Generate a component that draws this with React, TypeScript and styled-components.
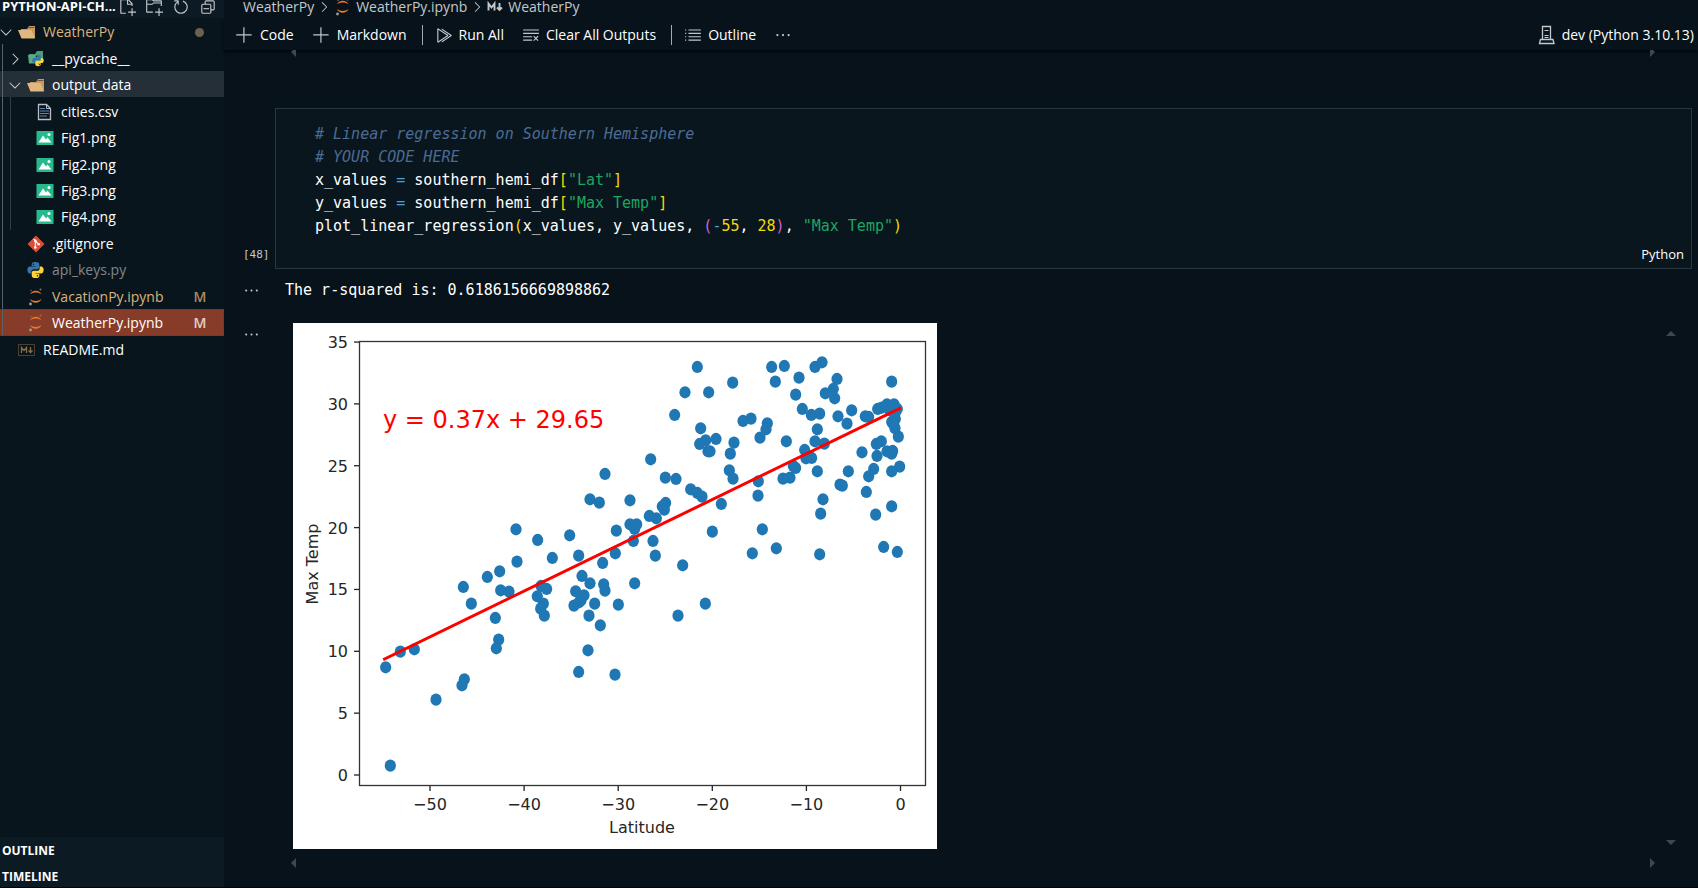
import React from 'react';
import styled, { createGlobalStyle, css } from 'styled-components';
import {
  VscAdd,
  VscChevronDown,
  VscChevronRight,
  VscClearAll,
  VscCollapseAll,
  VscEllipsis,
  VscListUnordered,
  VscNewFile,
  VscNewFolder,
  VscRefresh,
  VscRunAll,
} from 'react-icons/vsc';

const color = {
  editor: '#07121a',
  sidebar: '#09151d',
  section: '#0c1a24',
  cell: '#09161e',
  border: '#2a363f',
  text: '#ffffff',
  muted: '#c4c8ca',
  modified: '#d9b47c',
};

const uiFont = '"Open Sans", "Noto Sans", sans-serif';
const codeFont = '"DejaVu Sans Mono", "Liberation Mono", monospace';

const GlobalStyle = createGlobalStyle`
  *, *::before, *::after { box-sizing: border-box; }
  body {
    margin: 0;
    background: ${color.editor};
    color: ${color.text};
    font: 14px/20px ${uiFont};
  }
  button {
    margin: 0;
    padding: 0;
    border: 0;
    background: none;
    color: inherit;
    font: inherit;
    cursor: pointer;
  }
  svg { display: block; flex: none; }
`;

const Workbench = styled.div`
  display: grid;
  grid-template-columns: 224px minmax(0, 1fr);
  height: 100vh;
  overflow: hidden;
  border-bottom: 1px solid #020508;
`;

/* ---------- Explorer ---------- */

const Sidebar = styled.aside`
  display: flex;
  flex-direction: column;
  min-height: 0;
  background: ${color.sidebar};
`;

const ExplorerHeader = styled.header`
  display: flex;
  align-items: center;
  justify-content: space-between;
  height: 18px;
  padding: 0 7px 5px 2px;
  background: ${color.section};
`;

const ExplorerTitle = styled.h2`
  margin: 0;
  font-size: 13px;
  font-weight: 700;
  line-height: 13px;
  white-space: nowrap;
`;

const HeaderActions = styled.div`
  display: flex;
  gap: 9px;
  color: ${color.muted};
`;

const Tree = styled.ul`
  display: grid;
  grid-auto-rows: 1fr;
  height: 344px;
  margin: 0;
  padding: 0;
  list-style: none;
`;

const TreeItem = styled.li`
  display: flex;
`;

const guide = 'linear-gradient(#56616a, #56616a) no-repeat';

const TreeRow = styled.button<{ $level: number; $tone?: string; $state?: 'focused' | 'active' }>`
  display: flex;
  flex: 1;
  align-items: center;
  padding: 2px 17px 0 ${(p) => p.$level * 9}px;
  color: ${(p) => p.$tone ?? color.text};
  text-align: left;
  background: ${(p) =>
    p.$level === 0
      ? 'none'
      : p.$level === 1
        ? `${guide} 2px 0 / 1px 100%`
        : `${guide} 2px 0 / 1px 100%, linear-gradient(#323d45, #323d45) no-repeat 10px 0 / 1px 100%`};
  ${(p) => p.$state === 'focused' && css`background-color: #252f38;`}
  ${(p) =>
    p.$state === 'active' &&
    css`
      background-color: #863c29;
      box-shadow: inset 0 0 0 1px #8f3210;
    `}
`;

const Twistie = styled.span`
  display: flex;
  justify-content: center;
  width: 11px;
  margin-right: 7px;
  color: ${color.muted};
`;

const FileIcon = styled.span`
  display: flex;
  width: 25px;
`;

const FileName = styled.span`
  flex: 1;
  white-space: nowrap;
`;

const StatusLetter = styled.span`
  width: 14px;
  font-weight: 600;
  text-align: center;
  opacity: 0.75;
`;

const StatusDot = styled.span`
  width: 9px;
  height: 9px;
  margin-right: 3px;
  border-radius: 50%;
  background: #6c614d;
`;

const Sections = styled.div`
  margin: auto 0 -2px;
  background: ${color.section};
`;

const SectionButton = styled.button`
  display: block;
  width: 100%;
  height: 26px;
  padding: 2px 0 0 2px;
  font-size: 12px;
  font-weight: 700;
  text-align: left;
`;

/* ---------- Editor ---------- */

const Editor = styled.main`
  display: flex;
  flex-direction: column;
  min-width: 0;
  min-height: 0;
`;

const Breadcrumb = styled.nav`
  display: flex;
  align-items: center;
  gap: 2px;
  height: 20px;
  padding: 0 0 6px 19px;
  line-height: 14px;
  color: ${color.muted};
`;

const Crumb = styled.a`
  display: flex;
  align-items: center;
  gap: 5px;
  color: inherit;
  text-decoration: none;
  white-space: nowrap;
`;

const Toolbar = styled.div`
  display: flex;
  align-items: center;
  height: 30px;
  padding: 0 4px 0 11px;
  box-shadow: 0 2px 3px #02070b;
`;

const ToolButton = styled.button<{ $wide?: boolean }>`
  display: flex;
  align-items: center;
  gap: 6px;
  margin-right: ${(p) => (p.$wide ? 18 : 15)}px;
  white-space: nowrap;
  svg { color: ${color.muted}; }
`;

const Divider = styled.span`
  width: 1px;
  height: 20px;
  margin-right: 12px;
  background: #a5a9ab;
`;

const KernelButton = styled(ToolButton)`
  margin: 0 0 0 auto;
`;

const Notebook = styled.div`
  flex: 1;
  min-height: 0;
  overflow: hidden;
`;

const ArrowRow = styled.div`
  display: flex;
  justify-content: space-between;
  align-items: center;
  height: 28px;
  padding: 0 43px 0 67px;
`;

const TopArrowRow = styled(ArrowRow)`
  align-items: flex-start;
  height: 61px;
  margin-top: -3px;
`;

const CellRow = styled.section`
  display: grid;
  grid-template-columns: 51px minmax(0, 1fr);
  padding-right: 6px;
`;

const Gutter = styled.div`
  padding-left: 19px;
  color: ${color.muted};
`;

const ExecutionCount = styled(Gutter)`
  align-self: end;
  padding-bottom: 4px;
  font: 11px/20px ${codeFont};
`;

const CodeCell = styled.div`
  padding: 14px 7px 0 39px;
  border: 1px solid ${color.border};
  background: ${color.cell};
`;

const CodeLines = styled.pre`
  display: grid;
  grid-auto-rows: 1fr;
  align-items: center;
  height: 114px;
  margin: 0;
  font: 15px/22px ${codeFont};
`;

const Tok = styled.span<{ $c: string }>`
  color: ${(p) => p.$c};
`;

const Comment = styled.span`
  color: #4c6c93;
  font-style: italic;
`;

const CellStatus = styled.div`
  display: flex;
  justify-content: flex-end;
  align-items: center;
  height: 31px;
  padding-top: 3px;
  font-size: 13px;
`;

const TextOutput = styled.output`
  display: block;
  padding-left: 10px;
  font: 15px/42px ${codeFont};
`;

const OutputGutter = styled(Gutter)`
  display: flex;
  align-items: center;
  height: 42px;
`;

const PlotRow = styled(CellRow)`
  padding-top: 12px;
  ${OutputGutter} { height: 22px; }
`;

const PlotOutput = styled.div`
  display: flex;
  justify-content: space-between;
  padding: 0 16px 0 18px;
`;

const ScrollArrows = styled.div`
  display: flex;
  flex-direction: column;
  justify-content: space-between;
  padding: 8px 0 4px;
`;

/* ---------- Icons ---------- */

const arrowShapes = {
  up: '0,5 5,0 10,5',
  down: '0,0 10,0 5,5',
  left: '5,0 5,10 0,5',
  right: '0,0 5,5 0,10',
};

function Arrow({ dir }: { dir: keyof typeof arrowShapes }) {
  const flat = dir === 'up' || dir === 'down';
  return (
    <svg width={flat ? 10 : 5} height={flat ? 5 : 10} aria-hidden="true">
      <polygon points={arrowShapes[dir]} fill="#41484d" />
    </svg>
  );
}

const FolderIcon = () => (
  <svg width="18" height="16" viewBox="0 0 18 16">
    <path d="M3 14V5h6l2-3h6v12z" fill="#c79a62" />
    <path d="M10.500 3.500h6" stroke="#6d5535" strokeWidth="1" />
    <path d="M0 6h13.500l3.500 8.500H3.500z" fill="#e0b77f" />
  </svg>
);

function PythonShape() {
  return (
    <>
      <path
        d="M8.900.5C5.200.5 5 2 5 3v1.700h4v.7H3.300C1.300 5.400.4 7 .4 9s1 3.600 2.700 3.600h1.500v-2c0-1.500 1.200-2.500 2.600-2.500h3.600c1.200 0 2.200-1 2.200-2.200V3C13 1.300 11.400.5 8.900.5z"
        fill="#3776ab"
      />
      <path
        d="M9.100 17.500c3.700 0 3.900-1.500 3.900-2.500v-1.700H9v-.7h5.700c2 0 2.900-1.600 2.900-3.600s-1-3.600-2.700-3.600h-1.500v2c0 1.500-1.200 2.500-2.600 2.500H7.200c-1.200 0-2.200 1-2.200 2.200V15c0 1.700 1.600 2.500 4.100 2.500z"
        fill="#ffd43b"
      />
      <circle cx="6.900" cy="2.800" r=".8" fill="#0a151d" />
      <circle cx="11.100" cy="15.200" r=".8" fill="#0a151d" />
    </>
  );
}

const PythonIcon = () => (
  <svg width="17" height="18" viewBox="0 0 18 18">
    <PythonShape />
  </svg>
);

const PythonFolderIcon = () => (
  <svg width="18" height="17" viewBox="0 0 18 17">
    <path d="M2 13V4h6l2-3h6v12z" fill="#4d9a78" />
    <path d="M1 5h11l2 8.500H2z" fill="#58ab86" />
    <svg x="5" y="4" width="12" height="13" viewBox="0 0 18 18">
      <PythonShape />
    </svg>
  </svg>
);

const TextFileIcon = () => (
  <svg width="18" height="18" viewBox="0 0 18 18">
    <path d="M2.500 1.500h8l4 4v11h-12z" fill="none" stroke="#b9bec3" strokeWidth="1.300" />
    <path d="M10.500 1.500v4h4" fill="none" stroke="#b9bec3" />
    <path d="M4 5.500h5M4 8h9M4 10.500h9M4 13h7" stroke="#5d84b5" strokeWidth="1.200" />
  </svg>
);

const ImageIcon = () => (
  <svg width="18" height="14" viewBox="0 0 18 14">
    <rect x=".5" width="17" height="14" fill="#26b98b" />
    <path d="M2.500 11.500l4.500-7 3 4 1.500-2 4 5z" fill="#fff" />
    <circle cx="13" cy="3.500" r="1.500" fill="#fff" />
  </svg>
);

const GitIcon = () => (
  <svg width="18" height="18" viewBox="0 0 18 18">
    <path d="M9 .5L17.500 9 9 17.500.5 9z" fill="#dd4c35" />
    <path d="M6.500 4l1.700 1.700M8.300 5.500v7M8.500 6l3.200 3.200" stroke="#fff" strokeWidth="1.100" fill="none" />
    <circle cx="8.300" cy="5.800" r="1.300" fill="#fff" />
    <circle cx="8.300" cy="12.500" r="1.300" fill="#fff" />
    <circle cx="11.700" cy="9.300" r="1.300" fill="#fff" />
  </svg>
);

const JupyterIcon = () => (
  <svg width="17" height="18" viewBox="0 0 17 18">
    <path d="M3 6.500c2-5 9.500-5 11.500 0-3-2.600-8.500-2.600-11.500 0z" fill="#f37726" />
    <path d="M3 11c3 2.600 8.500 2.600 11.500 0-2 5-9.500 5-11.500 0z" fill="#f37726" />
    <circle cx="13.500" cy="1.500" r="1" fill="#767677" />
    <circle cx="4" cy="2.500" r=".7" fill="#767677" />
    <circle cx="3.500" cy="16" r="1.400" fill="#9e9e9e" />
  </svg>
);

const MarkdownFileIcon = () => (
  <svg width="18" height="12" viewBox="0 0 18 12" fill="none">
    <rect x=".5" y=".5" width="16" height="11" stroke="#4c4034" />
    <path d="M3.500 9V3.500L6 6.500l2.500-3V9M12.500 3v5M10.500 6.500l2 2 2-2" stroke="#8a6c4a" strokeWidth="1.300" />
  </svg>
);

const MarkdownSymbolIcon = () => (
  <svg width="16" height="12" viewBox="0 0 16 12" fill="none">
    <path d="M1.500 9.500V2.500L4.500 6.500l3-4v7M12.500 2v7M10 6.500l2.500 2.500L15 6.500" stroke="#c4c8ca" strokeWidth="1.900" />
  </svg>
);

const ServerIcon = () => (
  <svg width="18" height="20" viewBox="0 0 18 20" fill="none" stroke="#c4c8ca" strokeWidth="1.300">
    <path d="M4.500 14.500v-13h8v13M1.500 18.500l1-4h12.500l1 4z" />
    <path d="M6.500 5.500h4M6.500 10.500h4M6.500 12.500h4" strokeWidth="1" />
  </svg>
);

/* ---------- Data ---------- */

type Entry = {
  name: string;
  level: number;
  icon: () => React.ReactElement;
  folder?: 'open' | 'closed';
  tone?: string;
  badge?: 'dot' | 'M';
  state?: 'focused' | 'active';
};

const entries: Entry[] = [
  { name: 'WeatherPy', level: 0, icon: FolderIcon, folder: 'open', tone: color.modified, badge: 'dot' },
  { name: '__pycache__', level: 1, icon: PythonFolderIcon, folder: 'closed' },
  { name: 'output_data', level: 1, icon: FolderIcon, folder: 'open', state: 'focused' },
  { name: 'cities.csv', level: 2, icon: TextFileIcon },
  { name: 'Fig1.png', level: 2, icon: ImageIcon },
  { name: 'Fig2.png', level: 2, icon: ImageIcon },
  { name: 'Fig3.png', level: 2, icon: ImageIcon },
  { name: 'Fig4.png', level: 2, icon: ImageIcon },
  { name: '.gitignore', level: 1, icon: GitIcon },
  { name: 'api_keys.py', level: 1, icon: PythonIcon, tone: '#82878b' },
  { name: 'VacationPy.ipynb', level: 1, icon: JupyterIcon, tone: color.modified, badge: 'M' },
  { name: 'WeatherPy.ipynb', level: 1, icon: JupyterIcon, badge: 'M', state: 'active' },
  { name: 'README.md', level: 0, icon: MarkdownFileIcon },
];

/* Scatter samples, in thirds of a plot unit. */
const samples: [number, number][] = [
  [936, 452], [891, 528], [919, 538], [669, 618], [734, 650], [830, 636], [970, 622], [672, 715],
  [778, 704], [857, 697], [620, 744], [583, 761], [511, 791], [929, 719], [967, 690], [867, 758],
  [891, 780], [932, 783], [936, 802], [623, 801], [648, 805], [744, 788], [761, 797], [733, 819],
  [848, 804], [873, 816], [535, 841], [607, 884], [617, 949], [610, 975], [322, 985], [364, 978],
  [278, 1032], [514, 1068], [507, 1086], [429, 1129], [292, 1327], [751, 841], [743, 856], [754, 877],
  [843, 847], [858, 837], [905, 841], [976, 844], [888, 877], [922, 906], [885, 981], [857, 1046],
  [966, 1054], [864, 831], [1155, 877], [1237, 841], [1025, 780], [1213, 131], [1176, 207], [1247, 207],
  [1319, 178], [1436, 131], [1474, 128], [1447, 175], [1518, 163], [1508, 214], [1566, 131], [1587, 117],
  [1632, 167], [1621, 197], [1597, 210], [1625, 225], [1796, 175], [1145, 275], [1528, 257], [1555, 275],
  [1580, 271], [1635, 279], [1676, 261], [1662, 301], [1717, 279], [1727, 281], [1754, 257], [1766, 253],
  [1782, 243], [1803, 243], [1813, 257], [1791, 261], [1806, 271], [1796, 296], [1807, 287], [1806, 315],
  [1802, 303], [1816, 340], [1374, 286], [1350, 293], [1423, 300], [1419, 318], [1401, 343], [1223, 315],
  [1238, 351], [1220, 362], [1269, 347], [1323, 358], [1312, 391], [1245, 384], [1251, 384], [1073, 408],
  [1480, 354], [1573, 318], [1566, 354], [1594, 361], [1535, 380], [1539, 405], [1556, 404], [1707, 387],
  [1750, 362], [1765, 354], [1752, 398], [1782, 384], [1799, 383], [1796, 391], [1820, 430], [1796, 444],
  [1742, 437], [1727, 459], [1666, 444], [1573, 444], [1501, 428], [1508, 434], [1491, 463], [1470, 466],
  [1309, 441], [1320, 466], [1396, 474], [1395, 517], [1117, 463], [1149, 467], [1193, 498], [1213, 509],
  [1227, 520], [1285, 542], [1011, 531], [1118, 539], [1108, 549], [1114, 559], [1069, 578], [1090, 585],
  [1011, 603], [1031, 603], [1025, 617], [1021, 653], [1080, 653], [1087, 697], [1169, 726], [1258, 625],
  [1408, 618], [1378, 690], [1450, 675], [1580, 693], [1583, 571], [1590, 528], [1641, 484], [1648, 487],
  [1720, 506], [1748, 574], [1796, 549], [1772, 671], [1813, 686],
];

const xTicks = [-50, -40, -30, -20, -10, 0];
const yTicks = [0, 5, 10, 15, 20, 25, 30, 35];
const xAt = (lat: number) => 607.5 + lat * 9.41;
const yAt = (temp: number) => 452 - temp * 12.37;

function RegressionPlot() {
  return (
    <svg
      width="644"
      height="526"
      viewBox="0 0 644 526"
      role="img"
      aria-label="Max Temp against Latitude"
      fontFamily='"DejaVu Sans", sans-serif'
      fontSize="16"
      fill="#262626"
    >
      <rect width="644" height="526" fill="#fff" />
      {samples.map(([x, y], i) => (
        <ellipse key={i} cx={x / 3} cy={y / 3 + 0.3} rx="5.600" ry="6.100" fill="#1f77b4" />
      ))}
      <path d="M91.500 336L606.500 85.500" stroke="#f00" strokeWidth="3" strokeLinecap="square" />
      <rect x="66.500" y="18.500" width="566" height="444" fill="none" stroke="#333" strokeWidth="1.300" />
      {xTicks.map((t) => (
        <g key={t}>
          <path d={`M${xAt(t)} 463v5`} stroke="#222" strokeWidth="1.300" />
          <text x={xAt(t)} y="487" textAnchor="middle">
            {t < 0 ? `−${-t}` : t}
          </text>
        </g>
      ))}
      {yTicks.map((t) => (
        <g key={t}>
          <path d={`M61 ${yAt(t)}h5`} stroke="#222" strokeWidth="1.300" />
          <text x="55" y={yAt(t) + 6} textAnchor="end">
            {t}
          </text>
        </g>
      ))}
      <text x="349" y="510" textAnchor="middle">Latitude</text>
      <text transform="translate(25 241) rotate(-90)" textAnchor="middle">Max Temp</text>
      <text x="90" y="105" fontSize="24" fill="#f00">y = 0.37x + 29.65</text>
    </svg>
  );
}

const str = '#1ea562';
const op = '#4aa3d8';
const yellow = '#f5d90a';
const pink = '#d05fd0';

export default function App() {
  return (
    <>
      <GlobalStyle />
      <Workbench>
        <Sidebar>
          <ExplorerHeader>
            <ExplorerTitle>PYTHON-API-CH...</ExplorerTitle>
            <HeaderActions>
              <button aria-label="New File"><VscNewFile size={18} /></button>
              <button aria-label="New Folder"><VscNewFolder size={18} /></button>
              <button aria-label="Refresh"><VscRefresh size={18} /></button>
              <button aria-label="Collapse Folders"><VscCollapseAll size={18} /></button>
            </HeaderActions>
          </ExplorerHeader>
          <Tree>
            {entries.map(({ name, level, icon: Icon, folder, tone, badge, state }) => (
              <TreeItem key={name}>
                <TreeRow $level={level} $tone={tone} $state={state}>
                  <Twistie>
                    {folder === 'open' && <VscChevronDown size={18} />}
                    {folder === 'closed' && <VscChevronRight size={18} />}
                  </Twistie>
                  <FileIcon><Icon /></FileIcon>
                  <FileName>{name}</FileName>
                  {badge === 'dot' && <StatusDot />}
                  {badge === 'M' && <StatusLetter>M</StatusLetter>}
                </TreeRow>
              </TreeItem>
            ))}
          </Tree>
          <Sections>
            <SectionButton>OUTLINE</SectionButton>
            <SectionButton>TIMELINE</SectionButton>
          </Sections>
        </Sidebar>

        <Editor>
          <Breadcrumb aria-label="Breadcrumb">
            <Crumb href="#folder">WeatherPy</Crumb>
            <VscChevronRight size={16} />
            <Crumb href="#file"><JupyterIcon />WeatherPy.ipynb</Crumb>
            <VscChevronRight size={16} />
            <Crumb href="#heading"><MarkdownSymbolIcon />WeatherPy</Crumb>
          </Breadcrumb>
          <Toolbar>
            <ToolButton $wide><VscAdd size={19} />Code</ToolButton>
            <ToolButton><VscAdd size={19} />Markdown</ToolButton>
            <Divider />
            <ToolButton $wide><VscRunAll size={18} />Run All</ToolButton>
            <ToolButton><VscClearAll size={18} />Clear All Outputs</ToolButton>
            <Divider />
            <ToolButton $wide><VscListUnordered size={18} />Outline</ToolButton>
            <ToolButton aria-label="More Actions"><VscEllipsis size={18} /></ToolButton>
            <KernelButton><ServerIcon />dev (Python 3.10.13)</KernelButton>
          </Toolbar>

          <Notebook>
            <TopArrowRow>
              <Arrow dir="left" />
              <Arrow dir="right" />
            </TopArrowRow>
            <CellRow>
              <ExecutionCount>[48]</ExecutionCount>
              <CodeCell>
                <CodeLines>
                  <div><Comment># Linear regression on Southern Hemisphere</Comment></div>
                  <div><Comment># YOUR CODE HERE</Comment></div>
                  <div>
                    x_values <Tok $c={op}>=</Tok> southern_hemi_df<Tok $c={yellow}>[</Tok>
                    <Tok $c={str}>"Lat"</Tok><Tok $c={yellow}>]</Tok>
                  </div>
                  <div>
                    y_values <Tok $c={op}>=</Tok> southern_hemi_df<Tok $c={yellow}>[</Tok>
                    <Tok $c={str}>"Max Temp"</Tok><Tok $c={yellow}>]</Tok>
                  </div>
                  <div>
                    plot_linear_regression<Tok $c={yellow}>(</Tok>x_values, y_values, <Tok $c={pink}>(</Tok>
                    <Tok $c={op}>-</Tok><Tok $c={yellow}>55</Tok>, <Tok $c={yellow}>28</Tok>
                    <Tok $c={pink}>)</Tok>, <Tok $c={str}>"Max Temp"</Tok><Tok $c={yellow}>)</Tok>
                  </div>
                </CodeLines>
                <CellStatus><button>Python</button></CellStatus>
              </CodeCell>
            </CellRow>
            <CellRow>
              <OutputGutter><VscEllipsis size={17} /></OutputGutter>
              <TextOutput>The r-squared is: 0.6186156669898862</TextOutput>
            </CellRow>
            <PlotRow>
              <OutputGutter><VscEllipsis size={17} /></OutputGutter>
              <PlotOutput>
                <RegressionPlot />
                <ScrollArrows>
                  <Arrow dir="up" />
                  <Arrow dir="down" />
                </ScrollArrows>
              </PlotOutput>
            </PlotRow>
            <ArrowRow>
              <Arrow dir="left" />
              <Arrow dir="right" />
            </ArrowRow>
          </Notebook>
        </Editor>
      </Workbench>
    </>
  );
}
